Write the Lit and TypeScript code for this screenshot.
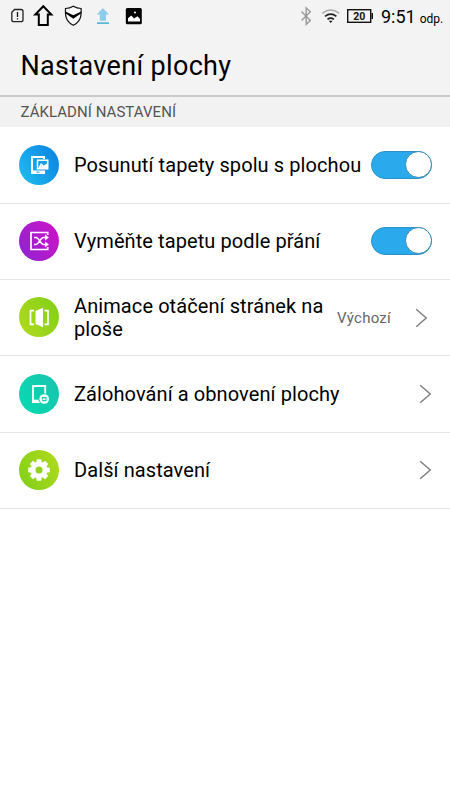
import { LitElement, html, css, svg } from "lit";
import { customElement } from "lit/decorators.js";

const icons: Record<string, unknown> = {
  wallpaper: svg`
    <path d="M25 14V12H13V28H25V26.5" fill="none" stroke="#fff" stroke-width="2"/>
    <path d="M12 25.5H26V29H12Z" fill="#fff"/><rect x="17.5" y="26.6" width="3" height="1" fill="#159fe8"/>
    <rect x="17" y="14.2" width="12.6" height="10.6" fill="#159fe8"/>
    <path d="M18.5 15.3H28.7V23.7H18.5Z" fill="none" stroke="#fff" stroke-width="1.5"/>
    <path d="M19 23.5L22 18L24.8 20.5L28 18.5V23.5Z" fill="#fff"/>`,
  shuffle: svg`
    <path d="M28.7 14V11.5H12V28.5H28.7V26" fill="none" stroke="#fff" stroke-width="1.7"/>
    <path d="M15 16.5H17C20.2 16.5 21.2 23.4 24.4 23.4H27M15 23.4H17C20.2 23.4 21.2 16.5 24.4 16.5H27" fill="none" stroke="#fff" stroke-width="1.5"/>
    <path d="M26 13.6L30 16.5L26 19.4ZM26 20.5L30 23.4L26 26.3Z" fill="#fff"/>`,
  page: svg`
    <path d="M15 13.7H11.5V27.3H15M25.5 13.7H29V27.3H25.5" fill="none" stroke="#fff" stroke-width="1.7"/>
    <path d="M16.5 14L24 10.8V30.2L16.5 27Z" fill="#fff"/>`,
  backup: svg`
    <path d="M26.2 20V12H14V28H21" fill="none" stroke="#fff" stroke-width="1.8"/>
    <path d="M13.1 25.7H21V28.8H13.1Z" fill="#fff"/>
    <circle cx="25.2" cy="25" r="5.8" fill="#0ed2ae"/><circle cx="25.2" cy="25" r="4.8" fill="#fff"/>
    <path d="M23.2 26.6H27V23.6H23.4V25.4" fill="none" stroke="#0ed2ae" stroke-width="1.1"/>`,
  gear: svg`
    <g fill="#fff">${[0, 45, 90, 135].map(
      (a) => svg`<path d="M17 14L17.8 9.2H22.2L23 14V26L22.2 30.8H17.8L17 26Z" transform=${`rotate(${a} 20 20)`}/>`,
    )}<circle cx="20" cy="20" r="8.3"/></g><circle cx="20" cy="20" r="3.5" fill="#91d31c"/>`,
};

interface Item {
  icon: string;
  label: string;
  value?: string;
  toggle?: boolean;
}

const items: Item[] = [
  { icon: "wallpaper", label: "Posunutí tapety spolu s plochou", toggle: true },
  { icon: "shuffle", label: "Vyměňte tapetu podle přání", toggle: true },
  { icon: "page", label: "Animace otáčení stránek na ploše", value: "Výchozí" },
  { icon: "backup", label: "Zálohování a obnovení plochy" },
  { icon: "gear", label: "Další nastavení" },
];

@customElement("app-root")
export class AppRoot extends LitElement {
  static styles = css`
    :host { display: block; width: 450px; height: 800px; background: #fff; color: #000; font-family: Roboto, sans-serif; overflow: hidden; }
    * { box-sizing: border-box; }
    svg { display: block; flex: none; }
    .top { height: 97px; background: #f3f3f3; border-bottom: 2px solid #cacaca; }
    .status { display: flex; height: 32px; }
    .clock { display: flex; align-items: baseline; margin-left: 7px; padding-top: 6px; line-height: 22px; font-size: 18px; white-space: nowrap; }
    .clock small { font-size: 12px; margin-left: 4px; }
    h1 { margin: 0; padding-left: 20.5px; font-size: 27px; letter-spacing: 0.33px; line-height: 32px; padding-top: 18px; font-weight: 400; white-space: nowrap; }
    .section { height: 29.5px; background: #f2f2f2; color: #555; padding-left: 20.5px; font-size: 15px; letter-spacing: 0.06px; line-height: 30px; white-space: nowrap; }
    .list { padding-top: 1px; }
    .row { height: 76.3px; display: flex; align-items: center; border-bottom: 1px solid #e4e4e4; padding: 0 18px 0 19px; }
    .icon { width: 40px; height: 40px; border-radius: 50%; margin: 0 15px 1px 0; flex: none; }
    .wallpaper { background: linear-gradient(60deg, #1fc0f2, #0b7fe0); }
    .shuffle { background: linear-gradient(60deg, #8c24d4, #d112c6); }
    .page { background: linear-gradient(60deg, #b3da1c, #7fcf1a); }
    .backup { background: linear-gradient(60deg, #06dcb2, #19c2ae); }
    .gear { background: linear-gradient(60deg, #7fcf1a, #b3da1c); }
    .label { flex: 1; font-size: 20px; letter-spacing: 0.09px; line-height: 23px; min-width: 0; padding-top: 1px; }
    .toggle { width: 61px; height: 28px; border-radius: 14px; background: #2aaaec; border: 1px solid #2b92c8; display: flex; justify-content: flex-end; flex: none; margin-bottom: 1px; }
    .knob { width: 27px; height: 27px; margin-top: -0.5px; margin-right: -0.5px; border-radius: 50%; background: #fff; border: 1px solid #3487b0; }
    .value { font-size: 15px; letter-spacing: 0.25px; color: #666; margin-right: 24px; padding-top: 1px; }
    .has-value { padding-right: 22px; }
  `;

  render() {
    return html`
      <header class="top">
        <div class="status">
          <svg width="374" height="32" viewBox="0 0 374 32" fill="none">
            <path d="M14.5 9.5H21Q23 9.5 23 11.5V20Q23 21.7 21 21.7H13.8Q11.8 21.7 11.8 20V12.3Z" stroke="#222" stroke-width="1.3"/>
            <path d="M17.5 12V17M17.5 18.3V19.6" stroke="#111" stroke-width="1.3"/>
            <path d="M43.3 6.2L51.3 14.5H47.8V25H38.8V14.5H35.3Z" stroke="#000" stroke-width="2"/>
            <path d="M73.3 6.3C70.5 8 68 8.5 65.5 8.5C65 17 66.5 22 73.3 25.3C80.1 22 81.6 17 81.1 8.5C78.6 8.5 76.1 8 73.3 6.3Z" stroke="#111" stroke-width="1.2" fill="#fafafa"/>
            <path d="M65.4 11.5L73.3 15.2L81.2 11.5V13.2L73.3 18.7L65.4 13.2Z" fill="#000"/>
            <path d="M102.9 8L109 14.6H106V20.8H99.8V14.6H96.8Z" fill="#8ccdec"/><path d="M97 22.3H109V23.9H97Z" fill="#4bb2d8"/>
            <rect x="125.8" y="8" width="16" height="16.2" rx="1.5" fill="#000"/>
            <path d="M128 21.5V18.3L131.2 15.4L134 18.4L137.5 16.3L140 19V21.5Z" fill="#fff"/><circle cx="135" cy="12.6" r="1" fill="#fff"/>
            <path d="M301.5 11.5L310.3 20.5L306.2 24.3V7.8L310.3 11.8L301.5 20.5" stroke="#999" stroke-width="1.4"/>
            <path d="M322.3 13.3Q330.7 6.7 339.2 13.3" stroke="#aaa" stroke-width="1.6"/>
            <path d="M325 16.4Q330.7 12 336.4 16.4M327.5 19.3Q330.7 16.8 333.9 19.3" stroke="#222" stroke-width="1.7"/>
            <path d="M328.8 20.8H332.6L330.7 23Z" fill="#111"/>
            <rect x="347.7" y="9.7" width="23" height="12.6" stroke="#111" stroke-width="1.4"/>
            <path d="M371.5 13H373V19H371.5Z" fill="#111"/>
            <text x="359.3" y="19.8" text-anchor="middle" font-family="Roboto" font-size="10.5" font-weight="700" fill="#111">20</text>
          </svg>
          <div class="clock"><span>9:51</span><small>odp.</small></div>
        </div>
        <h1>Nastavení plochy</h1>
      </header>
      <div class="section">ZÁKLADNÍ NASTAVENÍ</div>
      <main class="list">
        ${items.map(
          (it) => html`<div class="row ${it.value ? "has-value" : ""}">
            <div class="icon ${it.icon}"><svg width="40" height="40" viewBox="0 0 40 40">${icons[it.icon]}</svg></div>
            <div class="label">${it.label}</div>
            ${it.value ? html`<div class="value">${it.value}</div>` : ""}
            ${it.toggle
              ? html`<div class="toggle"><div class="knob"></div></div>`
              : html`<svg width="13" height="20" viewBox="0 0 13 20" fill="none"><path d="M1.2 1.2L11.3 10L1.2 18.8" stroke="#7d7d7d" stroke-width="1.4"/></svg>`}
          </div>`,
        )}
      </main>`;
  }
}
